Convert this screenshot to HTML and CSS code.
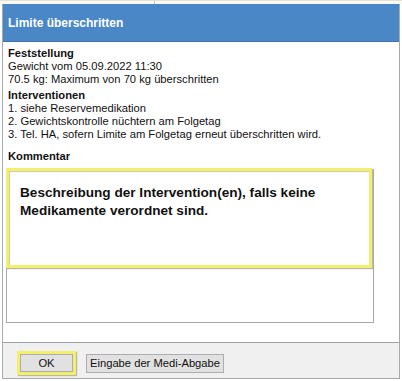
FILE: index.html
```html
<!DOCTYPE html>
<html lang="de">
<head>
<meta charset="utf-8">
<link rel="stylesheet" href="styles.css">
</head>
<body>
<div class="topstrip"><span class="topcell"></span></div>
<div class="dialog">
  <div class="titlebar">Limite überschritten</div>
  <div class="content">
    <div class="heading">Feststellung</div>
    <div class="line">Gewicht vom 05.09.2022 11:30</div>
    <div class="line">70.5 kg: Maximum von 70 kg überschritten</div>
    <div class="heading gap-s">Interventionen</div>
    <div class="line">1. siehe Reservemedikation</div>
    <div class="line">2. Gewichtskontrolle nüchtern am Folgetag</div>
    <div class="line">3. Tel. HA, sofern Limite am Folgetag erneut überschritten wird.</div>
    <div class="heading gap-l">Kommentar</div>
    <div class="textarea">
      <div class="callout">Beschreibung der Intervention(en), falls keine Medikamente verordnet sind.</div>
    </div>
  </div>
  <div class="footer">
    <span class="highlight"><button class="btn btn-ok">OK</button></span>
    <button class="btn">Eingabe der Medi-Abgabe</button>
  </div>
</div>
</body>
</html>
```

FILE: styles.css
```css
html, body {
  margin: 0;
  padding: 0;
  background: #ffffff;
}
body {
  font-family: "Liberation Sans", Arial, sans-serif;
  font-size: 11.2px;
  color: #111;
  width: 402px;
  height: 381px;
  overflow: hidden;
}
.topstrip {
  height: 3px;
  background: #fbf9f3;
  border-top: 1px solid #e6e2d8;
  display: flex;
}
.topcell {
  width: 154px;
  border-right: 1px solid #c9c4b8;
}
.dialog {
  margin: 0 2px;
  border: 1px solid #a9a9a9;
  border-top: none;
  height: 375px;
  box-sizing: border-box;
  display: flex;
  flex-direction: column;
}
.titlebar {
  height: 38px;
  background: #4a87c7;
  border-bottom: 1px solid #3f74ad;
  color: #fff;
  font-weight: bold;
  font-size: 12px;
  display: flex;
  align-items: center;
  padding-left: 5px;
  padding-top: 1px;
  box-sizing: border-box;
}
.content {
  padding: 5px 0 19px 3px;
  border-bottom: 1px solid #a0a0a0;
}
.heading {
  font-weight: bold;
  line-height: 13px;
  padding-left: 2px;
}
.line {
  line-height: 13px;
  padding-left: 2px;
}
.gap-s { margin-top: 3px; }
.gap-l { margin-top: 9px; }
.textarea {
  margin-top: 6px;
  width: 368px;
  height: 154px;
  border: 1px solid #a8a8a8;
  border-top-color: #c0c0c0;
  box-sizing: border-box;
  position: relative;
}
.callout {
  position: absolute;
  left: -1px;
  top: -2px;
  width: 366px;
  height: 100px;
  box-sizing: border-box;
  border: 3px solid #f2ef6c;
  box-shadow: 1px 1px 1px #b8b8a8, inset 1px 1px 1px #c8c8b8;
  background: #fff;
  padding: 13px 10px 0 11px;
  font-weight: bold;
  font-size: 13.6px;
  line-height: 18px;
  color: #111;
}
.footer {
  flex: 1;
  background: #f0f0f0;
  display: flex;
  align-items: center;
  padding-left: 14px;
  padding-top: 5px;
  gap: 10px;
}
.highlight {
  display: inline-flex;
  border: 3px solid #f2ef6c;
  box-shadow: 1px 1px 1px #b8b8a8;
  padding: 0;
}
.btn {
  font-family: "Liberation Sans", Arial, sans-serif;
  font-size: 11.2px;
  color: #111;
  background: #e1e1e1;
  border: 1px solid #adadad;
  height: 19px;
  padding: 0 3px;
  margin: 0;
  line-height: 17px;
}
.btn-ok {
  width: 53px;
  height: 18px;
}
```
